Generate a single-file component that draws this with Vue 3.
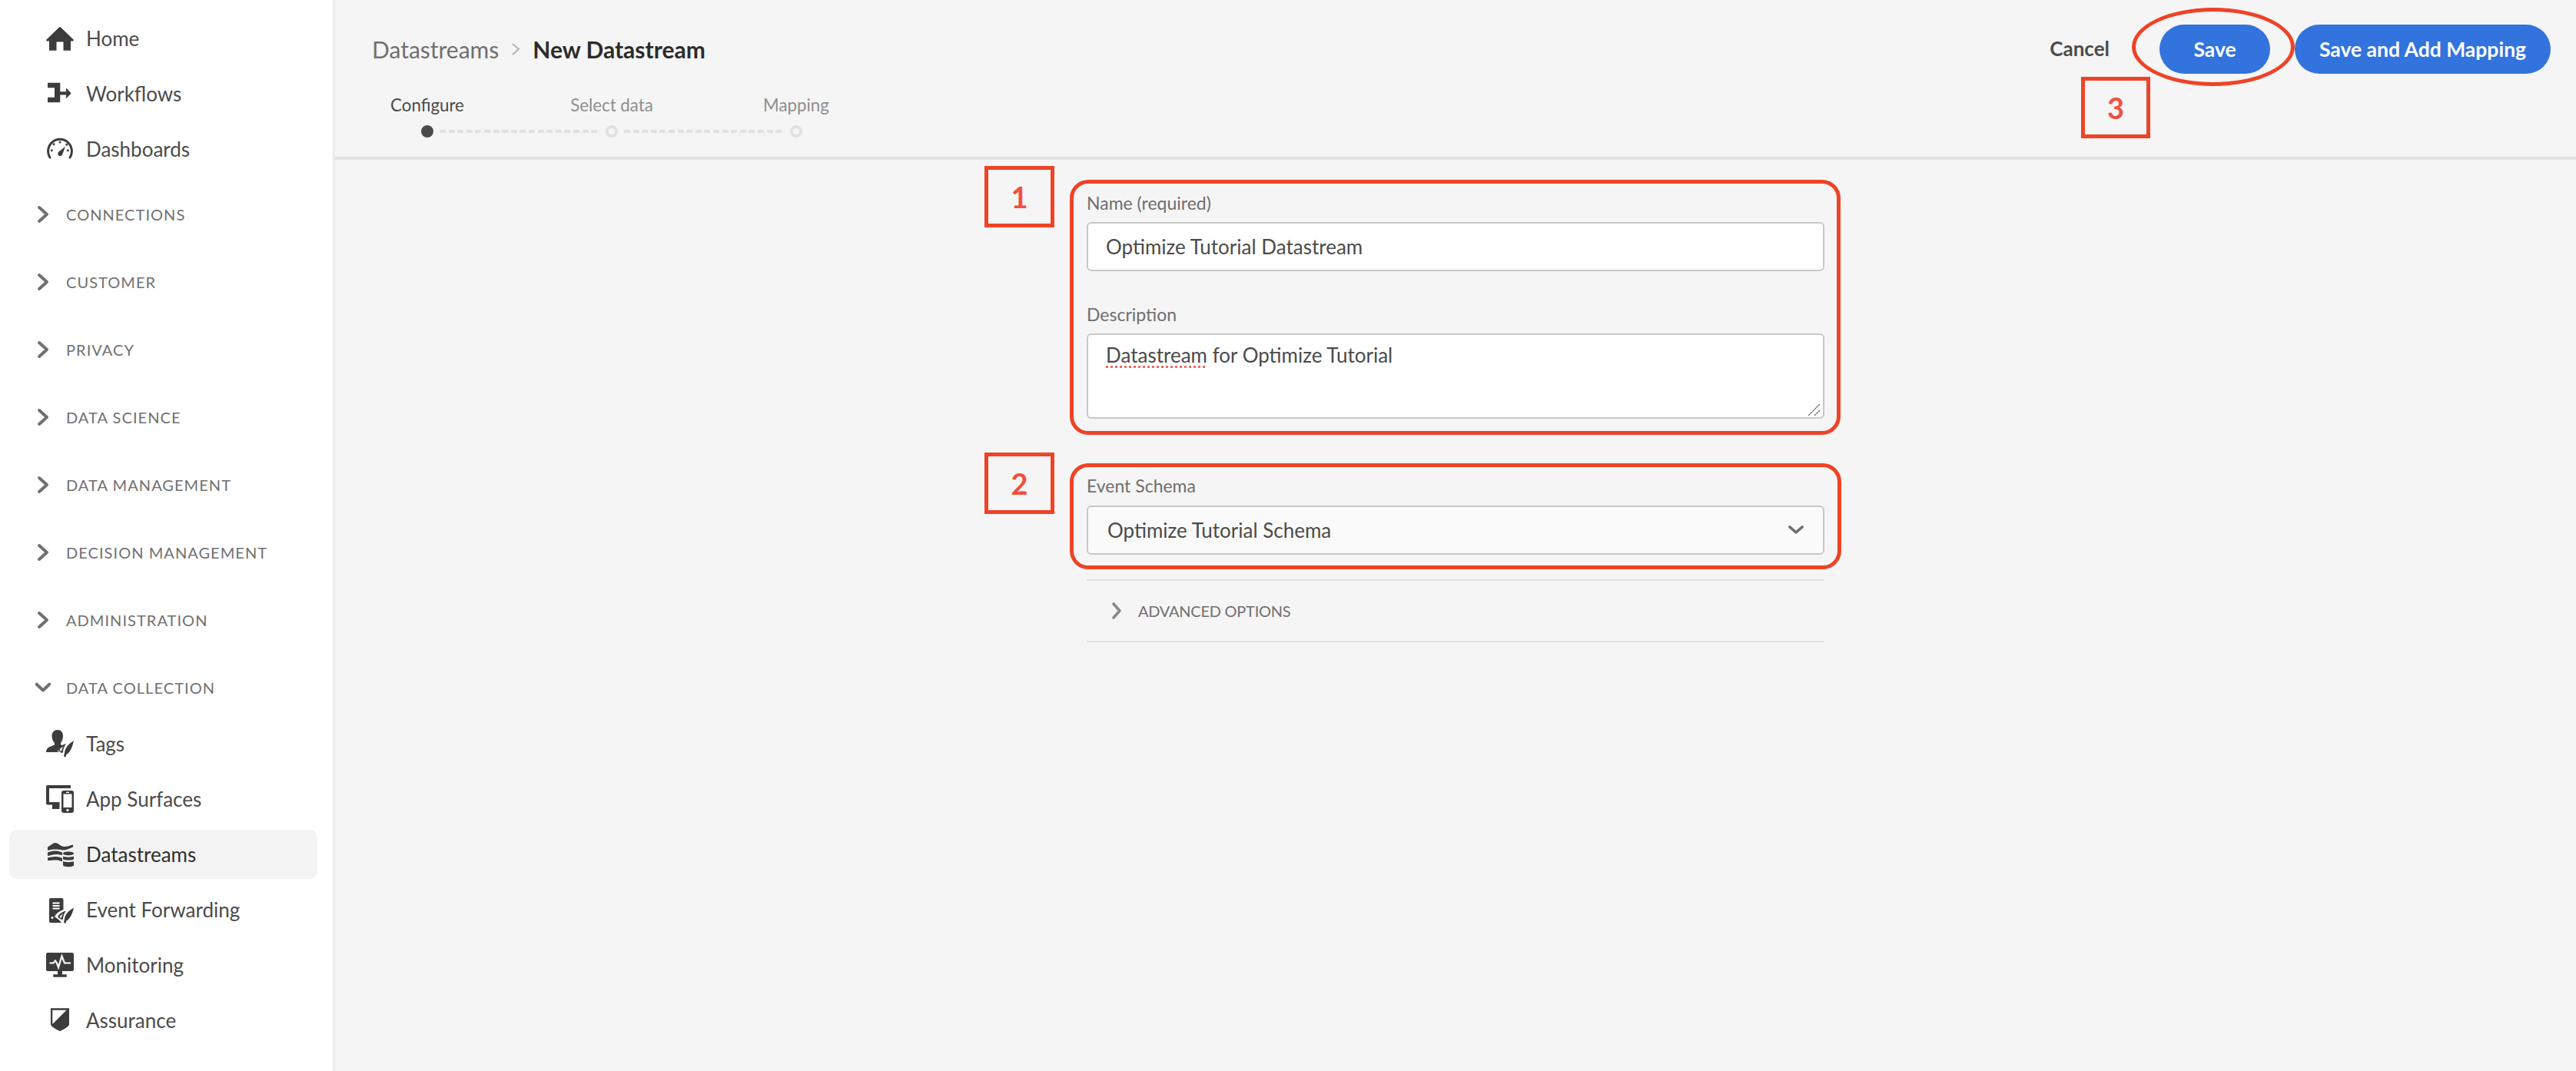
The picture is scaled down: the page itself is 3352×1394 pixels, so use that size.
<script setup>
const ink = '#3c3c3c'
const topItems = [
  { label: 'Home', shapes: [{ d: 'M17 3.5 Q18 2.6 19 3.5 L35.5 19.5 Q36.5 21.5 34.5 21.5 H32 V33.7 H22.5 V22.5 H13.5 V33.7 H4 V21.5 H1.5 Q-0.5 21.5 .5 19.5 Z' }] },
  { label: 'Workflows', shapes: [{ d: 'M2 3.7 H18.3 V15.3 H26 V10.3 L32.7 17.4 L26 24.3 V19.6 H18.3 V29.3 H2 V22.7 H11 V10.3 H2 Z' }] },
  { label: 'Dashboards', shapes: [
    { d: 'M5 29 A15.4 15.4 0 1 1 31 29', stroke: ink, fill: 'none', sw: 3, cap: 'round' },
    { d: 'M16.5 9 a1.5 1.5 0 1 0 3 0 a1.5 1.5 0 1 0 -3 0 Z M8.5 11.7 a1.5 1.5 0 1 0 3 0 a1.5 1.5 0 1 0 -3 0 Z M25.2 12.3 a1.5 1.5 0 1 0 3 0 a1.5 1.5 0 1 0 -3 0 Z M5.8 19.7 a1.5 1.5 0 1 0 3 0 a1.5 1.5 0 1 0 -3 0 Z M26.8 19.7 a1.5 1.5 0 1 0 3 0 a1.5 1.5 0 1 0 -3 0 Z M25 14.7 L21.4 24.6 A3.1 3.1 0 1 1 16.4 21.6 Z' }
  ] }
]
const sections = ['Connections', 'Customer', 'Privacy', 'Data Science', 'Data Management', 'Decision Management', 'Administration']
const subItems = [
  { label: 'Tags', shapes: [
    { d: 'M15 0 C19.5 0 22 3.5 22 8 C22 12 20.5 15 19 17 V19 L22 20.5 C19 22 16.5 24.5 14.5 27 L16.5 29 H0 C.5 25 2 23 6 21.5 L11 19.5 V17 C9 15 7.5 12 7.5 8 C7.5 3.5 10.5 0 15 0 Z' },
    { d: 'M36 14 C34 23 31 30 26.5 32 L25 36 L23 34 L24 30 C24.5 24.5 28 19 36 14 Z' },
    { d: 'M26 18 C22 19 17 22 15 26.5 L20 30 L22 29.5 C22 25 23.5 22 26 18 Z M22.5 21.5 C20 23 18 24.5 17.5 26.5 L20 28 C20 26 21 24 22.5 21.5 Z', rule: 'evenodd' }
  ] },
  { label: 'App Surfaces', shapes: [
    { d: 'M2 0 H32 V4 H4 V22 H17.5 V31 H8 V25.5 H2 Q0 25.5 0 23.5 V2 Q0 0 2 0 Z' },
    { d: 'M23 7 H33 Q36 7 36 10 V33 Q36 36 33 36 H23 Q20 36 20 33 V10 Q20 7 23 7 Z M22.5 11.5 V29 H33.5 V11.5 Z M26 8.8 V10 H30 V8.8 Z M28 30.8 a1.7 1.7 0 1 0 .01 0 Z', rule: 'evenodd' }
  ] },
  { label: 'Datastreams', shapes: [
    { d: 'M2 8.5 C6 6.5 9 3 12 3 C16 3 19 8 23.5 8 C27 8 31 6.5 35 5.5 V8.5 C31 10 27 12 23 12.5 C19 12.5 17 11.5 12 11.5 C8 11.5 5 12 2 13 Z' },
    { d: 'M2 15.5 C6 14 9 13.5 13 13.5 C16 13.5 19 15 21 15.5 V19 C18 18.5 16 18 13 18 C9 18 6 19.5 2 20 Z' },
    { d: 'M2 22.5 C6 21.5 10 21 13 21 C16 21 19 22 21 23 V27.5 C18 26 16 25.5 13 25.5 C9 25.5 6 26 2 26 Z' },
    { d: 'M22 17 C22 13.8 36 13.8 36 17 C36 20 22 20 22 17 Z M22 20.5 C24 22 34 22 36 20.5 V24 C36 26 22 26 22 24 Z M22 27 C24 28.5 34 28.5 36 27 V32 C36 35 22 35 22 32 Z' }
  ] },
  { label: 'Event Forwarding', shapes: [
    { d: 'M6 3 H20.5 Q22.5 3 22.5 5 V18 C17 20 13 23 11 27 L17 31.5 L20 35 H6 Q4 35 4 33 V5 Q4 3 6 3 Z M8.5 8.5 V10.5 H17.5 V8.5 Z M8.5 12 V14 H17.5 V12 Z M8.5 15.5 V17.5 H17.5 V15.5 Z M8 26.9 a1.6 1.6 0 1 0 .01 0 Z', rule: 'evenodd' },
    { d: 'M36 15.5 C34 24 31 30 26.5 32.5 L25 36.5 L23 34 L24 30 C24.5 25 28 20 36 15.5 Z' },
    { d: 'M26 19.5 C22 20.5 17 23 15 27.5 L20 31 L22 30.5 C22 26 23.5 23 26 19.5 Z M22.5 23 C20 24.5 18 26 17.5 27.5 L20 29 C20 27 21 25 22.5 23 Z', rule: 'evenodd' }
  ] },
  { label: 'Monitoring', shapes: [
    { d: 'M2 2 H34 Q36 2 36 4 V24 Q36 26 34 26 H21 V30.3 H26.7 V33.7 H9.3 V30.3 H15 V26 H2 Q0 26 0 24 V4 Q0 2 2 2 Z' },
    { d: 'M4.5 15.5 H9.5 L12 12.5 L14 15.5 L16 21 L20.5 6.5 L24 15.5 H32', fill: 'none', stroke: '#fff', sw: 2.2 }
  ] },
  { label: 'Assurance', shapes: [
    { d: 'M6 2.3 H30 V23 C30 26 24 29 18 32.3 C12 29 6 26 6 23 Z M8.3 4.8 V23 L26.5 4.8 Z', rule: 'evenodd' }
  ] }
]
</script>

<template>
  <div class="app">
    <aside class="sidebar">
      <div v-for="item in topItems" :key="item.label" class="nav-item">
        <svg class="icon" viewBox="0 0 36 36">
          <path v-for="(s, i) in item.shapes" :key="i" :d="s.d" :fill="s.fill || ink" :stroke="s.stroke || 'none'" :stroke-width="s.sw || 0" :stroke-linecap="s.cap || 'butt'" :fill-rule="s.rule || 'nonzero'" />
        </svg>
        <span>{{ item.label }}</span>
      </div>
      <div class="sections">
        <div v-for="s in sections" :key="s" class="section">
          <svg class="chev" viewBox="0 0 20 24"><path d="M5 3 L15 12 L5 21" fill="none" stroke="#707070" stroke-width="4" stroke-linejoin="round" stroke-linecap="round" /></svg>
          <span>{{ s }}</span>
        </div>
        <div class="section">
          <svg class="chev" viewBox="0 0 20 24"><path d="M1.5 7.5 L10 15.5 L18.5 7.5" fill="none" stroke="#707070" stroke-width="4" stroke-linejoin="round" stroke-linecap="round" /></svg>
          <span>Data Collection</span>
        </div>
      </div>
      <div class="sub">
        <div v-for="item in subItems" :key="item.label" class="nav-item" :class="{ active: item.label === 'Datastreams' }">
          <svg class="icon" viewBox="0 0 36 36">
            <path v-for="(s, i) in item.shapes" :key="i" :d="s.d" :fill="s.fill || ink" :stroke="s.stroke || 'none'" :stroke-width="s.sw || 0" :fill-rule="s.rule || 'nonzero'" />
          </svg>
          <span>{{ item.label }}</span>
        </div>
      </div>
    </aside>

    <main class="main">
      <header class="header">
        <div class="head-left">
          <div class="crumbs">
            <span class="crumb">Datastreams</span>
            <svg class="crumb-sep" viewBox="0 0 12 20"><path d="M2 3 L10 10 L2 17" fill="none" stroke="#b3b3b3" stroke-width="2" /></svg>
            <span class="crumb-current">New Datastream</span>
          </div>
          <div class="step-labels">
            <span class="on">Configure</span>
            <span>Select data</span>
            <span>Mapping</span>
          </div>
          <div class="step-track">
            <i class="dot on"></i><i class="dash"></i><i class="dot"></i><i class="dash"></i><i class="dot"></i>
          </div>
        </div>
        <div class="actions">
          <span class="cancel">Cancel</span>
          <button class="btn save">Save</button>
          <button class="btn wide">Save and Add Mapping</button>
        </div>
      </header>

      <section class="form">
        <div class="label first">Name (required)</div>
        <div class="field">Optimize Tutorial Datastream</div>
        <div class="label second">Description</div>
        <div class="field area">
          <span><span class="typo">Datastream</span> for Optimize Tutorial</span>
          <svg class="grip" viewBox="0 0 15 15"><path d="M0 15 L15 0 M8 15 L15 8" stroke="#6e6e6e" stroke-width="1.4" stroke-dasharray="3 .7" fill="none" /></svg>
        </div>
        <div class="label third">Event Schema</div>
        <div class="field select">
          <span>Optimize Tutorial Schema</span>
          <svg class="sel-chev" viewBox="0 0 20 12"><path d="M2 2 L10 9 L18 2" fill="none" stroke="#6e6e6e" stroke-width="3.6" stroke-linecap="round" stroke-linejoin="round" /></svg>
        </div>
        <div class="advanced">
          <svg class="adv-chev" viewBox="0 0 14 24"><path d="M3 3 L11 12 L3 21" fill="none" stroke="#8a8a8a" stroke-width="3.6" stroke-linecap="round" stroke-linejoin="round" /></svg>
          <span>Advanced Options</span>
        </div>
      </section>
    </main>

    <div class="mark num n1">1</div>
    <div class="mark round r1"></div>
    <div class="mark num n2">2</div>
    <div class="mark round r2"></div>
    <div class="mark num n3">3</div>
    <div class="mark ring"></div>
  </div>
</template>

<style scoped>
.app {
  position: relative;
  display: flex;
  width: 3352px;
  height: 1394px;
  overflow: hidden;
  background: #f5f5f5;
  font-family: Lato, "Liberation Sans", sans-serif;
  color: #4b4b4b;
}
.sidebar {
  flex: 0 0 433px;
  display: flex;
  flex-direction: column;
  padding-top: 14px;
  background: #fff;
  border-right: 3px solid #eaeaea;
}
.nav-item {
  flex: none;
  display: flex;
  align-items: center;
  gap: 16px;
  height: 64px;
  margin: 4px 20px 4px 12px;
  padding-left: 48px;
  border-radius: 10px;
  font-size: 26px;
  color: #4b4b4b;
}
.nav-item.active {
  background: #f3f3f3;
  color: #2f2f2f;
}
.icon {
  flex: none;
  width: 36px;
  height: 36px;
}
.sections {
  margin-top: 5px;
}
.section {
  display: flex;
  align-items: center;
  gap: 20px;
  height: 88px;
  padding-left: 46px;
  font-size: 20px;
  letter-spacing: 1.05px;
  text-transform: uppercase;
  color: #707070;
}
.chev {
  flex: none;
  width: 20px;
  height: 24px;
}
.sub {
  display: flex;
  flex-direction: column;
  margin-top: -7px;
}
.main {
  flex: 1;
  min-width: 0;
  display: flex;
  flex-direction: column;
}
.header {
  box-sizing: border-box;
  flex: none;
  display: flex;
  justify-content: space-between;
  height: 208px;
  border-bottom: 4px solid #e1e1e1;
}
.crumbs {
  display: flex;
  align-items: center;
  gap: 16px;
  height: 40px;
  margin: 44px 0 0 48px;
  font-size: 30px;
}
.crumb {
  color: #707070;
}
.crumb-sep {
  width: 12px;
  height: 20px;
}
.crumb-current {
  font-weight: 700;
  color: #2c2c2c;
}
.step-labels {
  display: grid;
  grid-template-columns: repeat(3, 240px);
  justify-items: center;
  margin-top: 37px;
  font-size: 22.3px;
  line-height: 32px;
  color: #8e8e8e;
}
.step-labels .on {
  color: #4b4b4b;
}
.step-track {
  display: flex;
  align-items: center;
  gap: 8px;
  height: 16px;
  margin-top: 10px;
  padding-left: 112px;
}
.dot {
  box-sizing: border-box;
  width: 16px;
  height: 16px;
  border: 4px solid #e1e1e1;
  border-radius: 50%;
}
.dot.on {
  border-color: #4b4b4b;
  background: #4b4b4b;
}
.dash {
  width: 208px;
  height: 4px;
  background: repeating-linear-gradient(90deg, #e1e1e1 0 8px, transparent 8px 11.6px);
}
.actions {
  display: flex;
  align-items: flex-start;
  padding: 32px 33px 0 0;
}
.cancel {
  margin-right: 65px;
  font-size: 26px;
  font-weight: 700;
  line-height: 62px;
  color: #4b4b4b;
}
.btn {
  height: 64px;
  padding: 0;
  border: 0;
  border-radius: 32px;
  background: #3273de;
  color: #fff;
  font: 700 26.5px Lato, "Liberation Sans", sans-serif;
}
.btn.save {
  width: 144px;
  margin-right: 32px;
}
.btn.wide {
  width: 333px;
}
.form {
  width: 960px;
  margin: 0 auto;
}
.label {
  font-size: 23px;
  line-height: 30px;
  color: #6e6e6e;
}
.first {
  margin-top: 41px;
}
.second {
  margin-top: 41px;
}
.third {
  margin-top: 72px;
}
.field {
  box-sizing: border-box;
  position: relative;
  display: flex;
  align-items: center;
  height: 64px;
  margin-top: 10px;
  padding: 0 23px;
  border: 2px solid #c8c8c8;
  border-radius: 6px;
  background: #fff;
  font-size: 26px;
  color: #4b4b4b;
}
.area {
  align-items: flex-start;
  height: 111px;
  padding-top: 10px;
  line-height: 32px;
}
.typo {
  text-decoration: underline dotted #f5685e 3px;
  text-underline-offset: 4px;
}
.grip {
  position: absolute;
  right: 4px;
  bottom: 2px;
  width: 15px;
  height: 15px;
}
.select {
  justify-content: space-between;
  margin-top: 11px;
  padding-left: 25px;
  padding-right: 25px;
  background: #fafafa;
}
.sel-chev {
  width: 20px;
  height: 12px;
}
.advanced {
  display: flex;
  align-items: center;
  gap: 21px;
  box-sizing: border-box;
  height: 82px;
  margin-top: 32px;
  padding-left: 32px;
  border-top: 2px solid #e1e1e1;
  border-bottom: 2px solid #e1e1e1;
  font-size: 20px;
  letter-spacing: -0.25px;
  text-transform: uppercase;
  color: #707070;
}
.adv-chev {
  width: 14px;
  height: 24px;
}
.mark {
  position: absolute;
  box-sizing: border-box;
  border: 5px solid #ee4327;
}
.num {
  display: flex;
  align-items: center;
  justify-content: center;
  width: 91px;
  height: 80px;
  font-size: 38px;
  font-weight: 700;
  color: #ef5040;
}
.n1 { left: 1281px; top: 216px; }
.n2 { left: 1281px; top: 589px; }
.n3 { left: 2708px; top: 100px; width: 90px; }
.round {
  left: 1392px;
  width: 1003px;
  border-radius: 24px;
}
.r1 { top: 234px; height: 332px; }
.r2 { top: 603px; height: 138px; width: 1004px; }
.ring {
  left: 2774px;
  top: 10px;
  width: 212px;
  height: 102px;
  border-radius: 50%;
}
</style>

<style>
html, body { background: #f5f5f5; }
</style>
